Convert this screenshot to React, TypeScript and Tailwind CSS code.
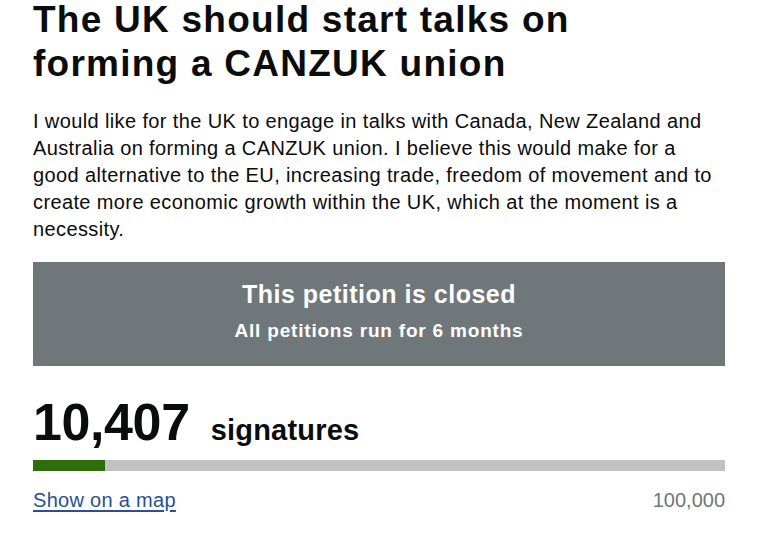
import React from 'react'

const signatures = 10407
const threshold = 100000

export default function App() {
  const pct = (signatures / threshold) * 100

  return (
    <div className="w-[768px] h-[538px] bg-white overflow-hidden font-['Liberation_Sans',Arial,sans-serif] text-[#0b0c0c]">
      <div className="w-[692px] ml-[33px]">
        <h1 className="w-[600px] text-[37px] leading-[44px] font-bold -mt-[2px] tracking-[1.25px]">
          The UK should start talks on forming a CANZUK union
        </h1>

        <p className="w-[685px] text-[20px] leading-[27px] mt-[22px] tracking-[0.38px]">
          I would like for the UK to engage in talks with Canada, New Zealand and Australia on
          forming a CANZUK union. I believe this would make for a good alternative to the EU,
          increasing trade, freedom of movement and to create more economic growth within the UK,
          which at the moment is a necessity.
        </p>

        {/* closed banner */}
        <div className="mt-[19px] h-[104px] pt-[17px] bg-[#6f777b] text-white text-center">
          <p className="text-[25px] leading-[30px] font-bold tracking-[0.5px]">This petition is closed</p>
          <p className="text-[19px] leading-[25px] font-bold mt-[9px] tracking-[0.8px]">All petitions run for 6 months</p>
        </div>

        <div className="mt-[30px] flex items-baseline gap-[21px]">
          <span className="text-[52px] leading-[52px] font-bold tracking-[-0.4px]">10,407</span>
          <span className="text-[29px] leading-[29px] font-bold tracking-[0.2px]">signatures</span>
        </div>

        <div className="mt-[12px] h-[11px] bg-[#bfc1c3]">
          <div className="h-full bg-[#2d6d0a]" style={{ width: `${pct}%` }} />
        </div>

        <div className="mt-[17px] flex justify-between text-[20px] leading-[25px]">
          <a href="#" className="text-[#2b4f96] underline underline-offset-[3px] tracking-[0.3px]">Show on a map</a>
          <span className="text-[#6f777b]">100,000</span>
        </div>
      </div>
    </div>
  )
}
